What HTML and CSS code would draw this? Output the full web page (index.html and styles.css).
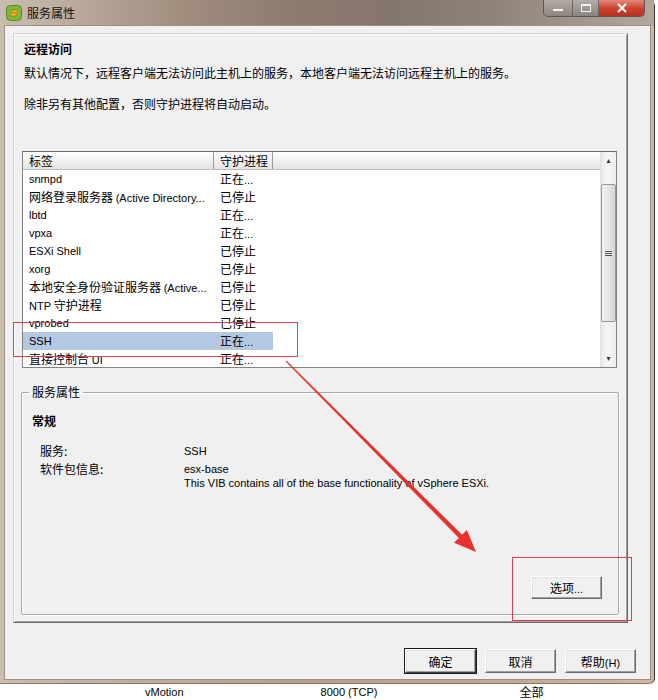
FILE: index.html
```html
<!DOCTYPE html>
<html lang="zh-CN">
<head>
  <meta charset="UTF-8" />
  <meta name="viewport" content="width=device-width, initial-scale=1.0" />
  <title>服务属性</title>
  <link rel="stylesheet" href="styles.css">
</head>
<body>
  <div class="screen">
    <div class="window">
      <div class="titlebar">
        <svg class="app-icon" width="16" height="16" viewBox="0 0 16 16">
          <rect x="0.5" y="0.5" width="15" height="15" rx="4" fill="#7cb83a" stroke="#4f8a1c"/>
          <path d="M4 11 L6 5 L12 5 L10 11 Z" fill="#f2b233" stroke="#b47a12" stroke-width="0.8"/>
          <path d="M5.5 8 L10.5 8" stroke="#b47a12" stroke-width="1"/>
        </svg>
        <span class="title">服务属性</span>
        <div class="caption-btns">
          <span class="cap cap-min"><i class="min-bar"></i></span>
          <span class="cap cap-max"><i class="max-box"></i></span>
          <span class="cap cap-close">
            <svg width="12" height="10" viewBox="0 0 12 10"><path d="M2 1 L10 9 M10 1 L2 9" stroke="#fff" stroke-width="2.2"/></svg>
          </span>
        </div>
      </div>

      <div class="client">
        <div class="panel">
          <div class="intro">
            <h1>远程访问</h1>
            <p class="desc">默认情况下，远程客户端无法访问此主机上的服务，本地客户端无法访问远程主机上的服务。</p>
            <p class="desc desc-2">除非另有其他配置，否则守护进程将自动启动。</p>
          </div>

          <div class="list">
            <div class="list-body">
              <div class="list-head">
                <span class="col1">标签</span>
                <span class="col2">守护进程</span>
              </div>
              <div class="row"><span class="col1 en">snmpd</span><span class="col2">正在<span class="en">...</span></span></div>
              <div class="row"><span class="col1">网络登录服务器 <span class="en">(Active Directory...</span></span><span class="col2">已停止</span></div>
              <div class="row"><span class="col1 en">lbtd</span><span class="col2">正在<span class="en">...</span></span></div>
              <div class="row"><span class="col1 en">vpxa</span><span class="col2">正在<span class="en">...</span></span></div>
              <div class="row"><span class="col1 en">ESXi Shell</span><span class="col2">已停止</span></div>
              <div class="row"><span class="col1 en">xorg</span><span class="col2">已停止</span></div>
              <div class="row"><span class="col1">本地安全身份验证服务器 <span class="en">(Active...</span></span><span class="col2">已停止</span></div>
              <div class="row"><span class="col1"><span class="en">NTP</span> 守护进程</span><span class="col2">已停止</span></div>
              <div class="row"><span class="col1 en">vprobed</span><span class="col2">已停止</span></div>
              <div class="row selected"><span class="col1 en">SSH</span><span class="col2">正在<span class="en">...</span></span></div>
              <div class="row"><span class="col1">直接控制台 <span class="en">UI</span></span><span class="col2">正在<span class="en">...</span></span></div>
            </div>
            <div class="scrollbar">
              <span class="sb-arrow">&#9652;</span>
              <div class="sb-track">
                <div class="sb-thumb"><i></i><i></i><i></i></div>
              </div>
              <span class="sb-arrow">&#9662;</span>
            </div>
          </div>

          <fieldset class="group">
            <legend>服务属性</legend>
            <div class="group-body">
              <h2>常规</h2>
              <div class="props">
                <div class="prop">
                  <span class="prop-label">服务:</span>
                  <span class="prop-value en">SSH</span>
                </div>
                <div class="prop prop-multi">
                  <span class="prop-label">软件包信息:</span>
                  <span class="prop-value en">esx-base<br>This VIB contains all of the base functionality of vSphere ESXi.</span>
                </div>
              </div>
              <div class="group-actions">
                <button class="btn">选项<span class="en">...</span></button>
              </div>
            </div>
          </fieldset>
        </div>

        <div class="dialog-btns">
          <button class="btn btn-default">确定</button>
          <button class="btn">取消</button>
          <button class="btn">帮助<span class="en">(H)</span></button>
        </div>
      </div>
    </div>

    <div class="behind-row">
      <span class="behind-a en">vMotion</span>
      <span class="behind-b en">8000 (TCP)</span>
      <span class="behind-c">全部</span>
    </div>

    <svg class="annot" width="658" height="700" viewBox="0 0 658 700">
      <rect x="13.5" y="322.5" width="284" height="34" fill="none" stroke="#d8404c" stroke-width="1"/>
      <rect x="512.5" y="557.5" width="119" height="63" fill="none" stroke="#d8404c" stroke-width="1"/>
      <polygon points="285.6,361.4 458.9,538 454.1,542.7 476,552 466.9,530.1 462.1,534.8 286.4,360.6" fill="#e8302c"/>
    </svg>
  </div>
</body>
</html>
```

FILE: styles.css
```css
body {
  margin: 0;
  background: #fff;
  color: #000;
  font-family: "Noto Sans CJK SC", sans-serif;
  font-size: 12px;
}
.en {
  font-family: "Liberation Sans", Arial, sans-serif;
  font-size: 11px;
}
.screen {
  position: relative;
  width: 658px;
  height: 700px;
  overflow: hidden;
  background: #fff;
}
.window {
  width: 655px;
  height: 684px;
  box-sizing: border-box;
  background: linear-gradient(90deg, #cbbcae 0%, #c3ae9a 20%, #b9a08a 45%, #c2a48c 70%, #d4b59c 100%);
  border-right: 1px solid #3a3a3a;
  border-bottom: 1px solid #8a7a6e;
  border-radius: 0 6px 6px 0;
}

/* title bar */
.titlebar {
  height: 26px;
  display: flex;
  align-items: center;
  padding-left: 6px;
  background: linear-gradient(90deg, #c9bcb0 0%, #b9aa9c 12%, #a08d7e 28%, #8d7b6f 45%, #85766c 60%, #8f8279 75%, #a2958d 88%, #b3a69c 100%);
}
.app-icon {
  flex: none;
}
.title {
  margin-left: 5px;
  font-size: 12px;
  color: #111;
  line-height: 16px;
}
.caption-btns {
  margin-left: auto;
  margin-right: 9px;
  align-self: flex-start;
  display: flex;
  height: 16px;
  border: 1px solid #5c5550;
  border-top: none;
  border-radius: 0 0 5px 5px;
  overflow: hidden;
}
.cap {
  display: flex;
  align-items: center;
  justify-content: center;
  height: 16px;
}
.cap-min {
  width: 28px;
  background: linear-gradient(#b4aca6, #8c847e);
  border-right: 1px solid #6d655f;
}
.min-bar {
  display: block;
  width: 10px;
  height: 2px;
  margin-top: 4px;
  background: #f4f4f4;
}
.cap-max {
  width: 25px;
  background: linear-gradient(#b4aca6, #8c847e);
  border-right: 1px solid #6d655f;
}
.max-box {
  display: block;
  width: 8px;
  height: 5px;
  border: 1px solid #f4f4f4;
  border-top-width: 2px;
}
.cap-close {
  width: 45px;
  background: linear-gradient(#e48a7c, #c9402e 55%, #b8321f);
}

/* client area */
.client {
  margin-left: 5px;
  width: 645px;
  height: 653px;
  background: #f0f0f0;
  overflow: hidden;
  box-shadow: 0 0 0 1px #9c8f84;
}
.panel {
  margin: 7px 0 0 8px;
  width: 615px;
  height: 590px;
  box-sizing: border-box;
  border: 1px solid;
  border-color: #d4d4d4 #6a6a6a #6a6a6a #d4d4d4;
  box-shadow: inset 1px 1px #fff, inset -1px -1px #a0a0a0;
}
.intro {
  padding: 7px 0 0 10px;
}
.intro h1 {
  margin: 0;
  font-size: 12px;
  font-weight: bold;
  line-height: 16px;
}
.desc {
  margin: 8px 0 0;
  line-height: 16px;
  font-size: 12px;
}
.desc-2 {
  margin-top: 15px;
}

/* list */
.list {
  margin: 39px 0 0 8px;
  width: 595px;
  height: 217px;
  box-sizing: border-box;
  border: 1px solid #828282;
  border-top-color: #6a6a6a;
  background: #fff;
  display: flex;
  overflow: hidden;
}
.list-body {
  flex: 1;
  overflow: hidden;
}
.list-head {
  display: flex;
  height: 18px;
  box-sizing: border-box;
  background: linear-gradient(#fefefe, #f2f2f2 50%, #e3e3e3);
  border-bottom: 1px solid #bdbdbd;
}
.list-head span {
  line-height: 17px;
  border-right: 1px solid #9a9a9a;
}
.col1 {
  width: 191px;
  padding-left: 6px;
  box-sizing: border-box;
  white-space: nowrap;
  overflow: hidden;
}
.col2 {
  width: 59px;
  padding-left: 6px;
  box-sizing: border-box;
  white-space: nowrap;
}
.row {
  display: flex;
  height: 18px;
  line-height: 18px;
}
.row.selected .col1,
.row.selected .col2 {
  background: #b5c8e1;
}
.row.selected {
  width: 250px;
  box-shadow: inset 0 0 0 1px #a3b9d6;
}

/* scrollbar */
.scrollbar {
  width: 15px;
  display: flex;
  flex-direction: column;
  background: linear-gradient(90deg, #e8e8e8, #f6f6f6 40%, #ededed);
  border-left: 1px solid #e2e2e2;
}
.sb-arrow {
  height: 17px;
  line-height: 17px;
  text-align: center;
  font-size: 8px;
  color: #333;
  font-family: "DejaVu Sans", sans-serif;
}
.sb-track {
  flex: 1;
}
.sb-thumb {
  margin: 15px 0 0 0;
  height: 138px;
  box-sizing: border-box;
  border: 1px solid #979797;
  border-radius: 2px;
  background: linear-gradient(90deg, #f1f1f1, #e6e6e6 50%, #d6d6d6);
  display: flex;
  flex-direction: column;
  justify-content: center;
  align-items: center;
  gap: 1px;
}
.sb-thumb i {
  display: block;
  width: 7px;
  height: 1px;
  background: #555;
}

/* service properties group */
.group {
  margin: 16px 0 0 7px;
  width: 598px;
  height: 231px;
  box-sizing: border-box;
  padding: 0;
  border: 1px solid #a8a8a8;
  border-radius: 2px;
  box-shadow: inset 1px 1px #fff, 1px 1px #fff;
}
.group legend {
  margin-left: 7px;
  padding: 0 3px;
  line-height: 16px;
  font-size: 12px;
}
.group-body {
  height: 214px;
  display: flex;
  flex-direction: column;
  padding-left: 10px;
}
.group-body h2 {
  margin: 13px 0 0;
  font-size: 12px;
  font-weight: bold;
  line-height: 16px;
}
.props {
  margin-top: 14px;
  padding-left: 8px;
}
.prop {
  display: flex;
  line-height: 16px;
}
.prop-label {
  width: 144px;
  flex: none;
}
.prop-multi {
  margin-top: 3px;
  line-height: 14px;
}
.group-actions {
  margin-top: auto;
  display: flex;
  justify-content: flex-end;
  padding: 0 16px 15px 0;
}

/* buttons */
.btn {
  width: 71px;
  height: 24px;
  padding: 0;
  font-family: "Noto Sans CJK SC", sans-serif;
  font-size: 12px;
  color: #000;
  background: #f0f0f0;
  border: 1px solid;
  border-color: #fff #696969 #696969 #fff;
  box-shadow: inset -1px -1px #a0a0a0, inset 1px 1px #e3e3e3;
}
.group-actions .btn {
  height: 23px;
}
.btn-default {
  outline: 1px solid #1a1a1a;
  outline-offset: 0;
  border-color: #fff #404040 #404040 #fff;
}
.dialog-btns {
  display: flex;
  justify-content: flex-end;
  gap: 9px;
  margin: 26px 14px 0 0;
}

/* application behind the dialog */
.behind-row {
  height: 16px;
  position: relative;
  line-height: 16px;
  display: flex;
}
.behind-a {
  margin-left: 145px;
}
.behind-b {
  margin-left: 137px;
}
.behind-c {
  margin-left: 142px;
}

/* red annotations drawn over the screenshot */
.annot {
  position: absolute;
  left: 0;
  top: 0;
  pointer-events: none;
}
```
